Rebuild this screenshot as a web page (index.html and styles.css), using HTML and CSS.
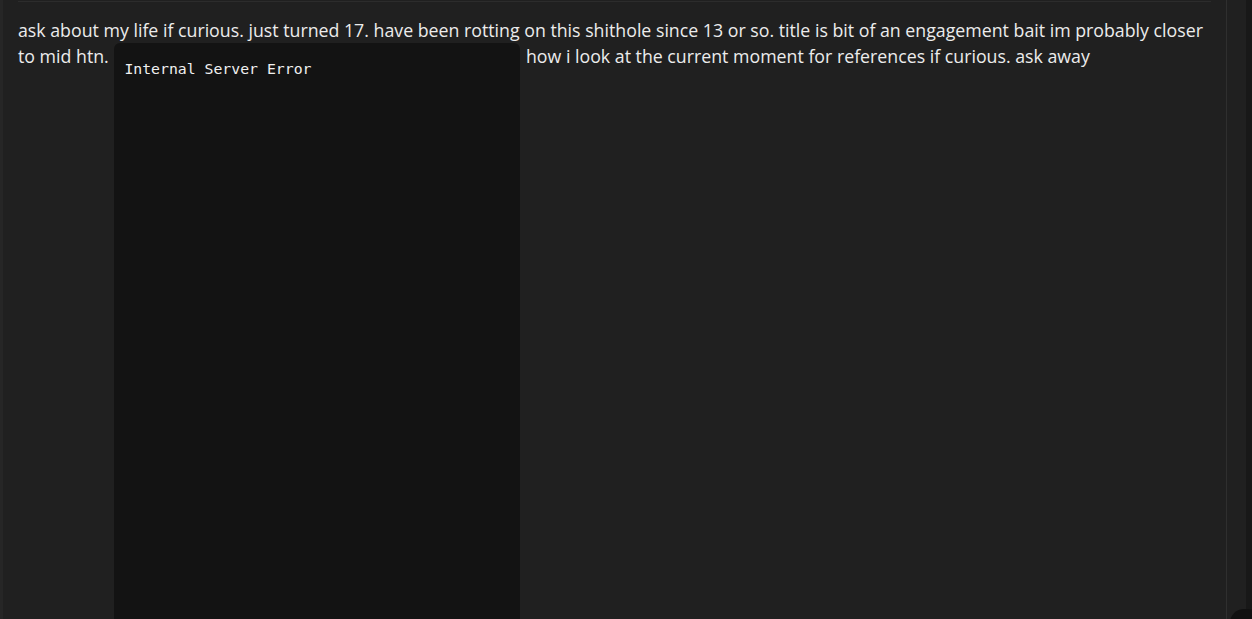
FILE: index.html
```html
<!DOCTYPE html>
<html lang="en">
<head>
<meta charset="utf-8">
<title>Post</title>
<link rel="stylesheet" href="styles.css">
</head>
<body>
<div class="page">
  <div class="edge-left"></div>
  <main class="post">
    <div class="rule"></div>
    <p class="post-text">ask about my life if curious. just turned 17. have been rotting on this shithole since 13 or so. title is bit of an engagement bait im probably closer to mid htn. <span class="embed"><span class="embed-msg">Internal Server Error</span></span> how i look at the current moment for references if curious. ask away</p>
  </main>
  <div class="gutter"></div>
  <div class="scrollbar"></div>
  <div class="corner-button"></div>
</div>
</body>
</html>
```
FILE: styles.css
```css
html, body {
  margin: 0;
  padding: 0;
  height: 100%;
  background: #202020;
  overflow: hidden;
}

.page {
  display: flex;
  height: 619px;
  position: relative;
  background: #202020;
}

.edge-left {
  width: 3px;
  flex: none;
  background: #262626;
}

.post {
  flex: 1;
  min-width: 0;
  padding: 1px 15px 0 15px;
  border-right: 1px solid #2f2f2f;
  overflow: hidden;
}

.rule {
  height: 1px;
  background: #2c2c2c;
}

.post-text {
  margin: 15px 0 0 0;
  font-family: "Open Sans", "Noto Sans", sans-serif;
  font-size: 17.75px;
  line-height: 26px;
  color: #ececec;
}

.embed {
  display: inline-block;
  vertical-align: top;
  width: 406px;
  height: 620px;
  margin: 0 1px 0 1px;
  background: #131313;
  border-radius: 6px 6px 0 0;
}

.embed-msg {
  display: block;
  padding: 16px 10px 0 10px;
  font-family: "DejaVu Sans Mono", "Liberation Mono", monospace;
  font-size: 14.8px;
  line-height: 20px;
  color: #f0f0f0;
}

.gutter {
  width: 19px;
  flex: none;
}

.scrollbar {
  width: 6px;
  flex: none;
  background: #181818;
}

.corner-button {
  position: absolute;
  right: -10px;
  bottom: -30px;
  width: 32px;
  height: 40px;
  border-radius: 14px;
  background: #111111;
}
```
